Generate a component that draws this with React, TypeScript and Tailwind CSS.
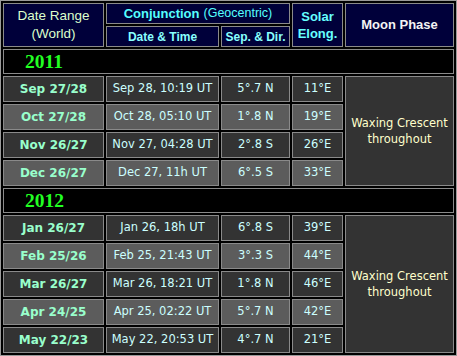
import React from 'react'

type Row = { range: string; when: string; sep: string; elong: string }

const rows2011: Row[] = [
  { range: 'Sep 27/28', when: 'Sep 28, 10:19 UT', sep: '5°.7 N', elong: '11°E' },
  { range: 'Oct 27/28', when: 'Oct 28, 05:10 UT', sep: '1°.8 N', elong: '19°E' },
  { range: 'Nov 26/27', when: 'Nov 27, 04:28 UT', sep: '2°.8 S', elong: '26°E' },
  { range: 'Dec 26/27', when: 'Dec 27, 11h UT', sep: '6°.5 S', elong: '33°E' },
]

const rows2012: Row[] = [
  { range: 'Jan 26/27', when: 'Jan 26, 18h UT', sep: '6°.8 S', elong: '39°E' },
  { range: 'Feb 25/26', when: 'Feb 25, 21:43 UT', sep: '3°.3 S', elong: '44°E' },
  { range: 'Mar 26/27', when: 'Mar 26, 18:21 UT', sep: '1°.8 N', elong: '46°E' },
  { range: 'Apr 24/25', when: 'Apr 25, 02:22 UT', sep: '5°.7 N', elong: '42°E' },
  { range: 'May 22/23', when: 'May 22, 20:53 UT', sep: '4°.7 N', elong: '21°E' },
]

const cell = 'border border-[#8a8a8a] flex items-center justify-center text-center'
const head = cell + ' bg-[#00003a] font-["Liberation_Sans",Arial,sans-serif]'
const val = 'font-["DejaVu_Sans",Verdana,sans-serif] text-[11.5px] text-[#ccffff]'

const DataRow = ({ r, light }: { r: Row; light: boolean }) => {
  const bg = light ? 'bg-[#5c5c5c]' : 'bg-[#333333]'
  return (
    <>
      <div className={`${cell} ${bg} font-["DejaVu_Sans",Verdana,sans-serif] text-[12px] font-bold text-[#99ffcc]`}>
        {r.range}
      </div>
      <div className={`${cell} ${bg} ${val}`}>{r.when}</div>
      <div className={`${cell} ${bg} ${val}`}>{r.sep}</div>
      <div className={`${cell} ${bg} ${val}`}>{r.elong}</div>
    </>
  )
}

const YearRow = ({ year }: { year: string }) => (
  <div className="col-span-5 border border-[#8a8a8a] bg-black flex items-center pl-[21px] font-['Liberation_Serif','Times_New_Roman',serif] text-[19.5px] font-bold text-[#22ff22]">
    {year}
  </div>
)

const MoonCell = ({ span }: { span: string }) => (
  <div className={`${cell} ${span} col-start-5 bg-[#333333] font-["DejaVu_Sans",Verdana,sans-serif] text-[11.5px] leading-[16px] text-[#ffffcc]`}>
    Waxing Crescent
    <br />
    throughout
  </div>
)

export default function App() {
  return (
    <div className="w-[457px] h-[356px] bg-black">
      <div className="grid grid-cols-[101px_113px_69px_51px_109px] grid-rows-[21px_21px_25px_26px_26px_26px_26px_25px_26px_26px_26px_26px_26px] gap-[2px] p-[2px] border border-[#9a9a9a] bg-black">
        <div className={`${head} row-span-2 flex-col text-[13.5px] leading-[18px] text-[#ddffcc]`}>
          <span>Date Range</span>
          <span>(World)</span>
        </div>
        <div className={`${head} col-span-2 text-[13px] text-[#55ffff]`}>
          <span className="font-bold">Conjunction</span>
          <span className="ml-[4px] text-[12.5px]">(Geocentric)</span>
        </div>
        <div className={`${head} row-span-2 flex-col text-[13px] font-bold leading-[17px] text-[#66ffff]`}>
          <span>Solar</span>
          <span>Elong.</span>
        </div>
        <div className={`${head} row-span-2 text-[13px] font-bold text-[#f4f4f4]`}>Moon Phase</div>
        <div className={`${head} text-[12px] font-bold text-[#88ffff]`}>Date &amp; Time</div>
        <div className={`${head} text-[12px] font-bold text-[#88ffff]`}>Sep. &amp; Dir.</div>

        <YearRow year="2011" />
        {rows2011.map((r, i) => (
          <React.Fragment key={r.range}>
            <DataRow r={r} light={i % 2 === 1} />
            {i === 0 && <MoonCell span="row-span-4" />}
          </React.Fragment>
        ))}

        <YearRow year="2012" />
        {rows2012.map((r, i) => (
          <React.Fragment key={r.range}>
            <DataRow r={r} light={i % 2 === 1} />
            {i === 0 && <MoonCell span="row-span-5" />}
          </React.Fragment>
        ))}
      </div>
    </div>
  )
}
